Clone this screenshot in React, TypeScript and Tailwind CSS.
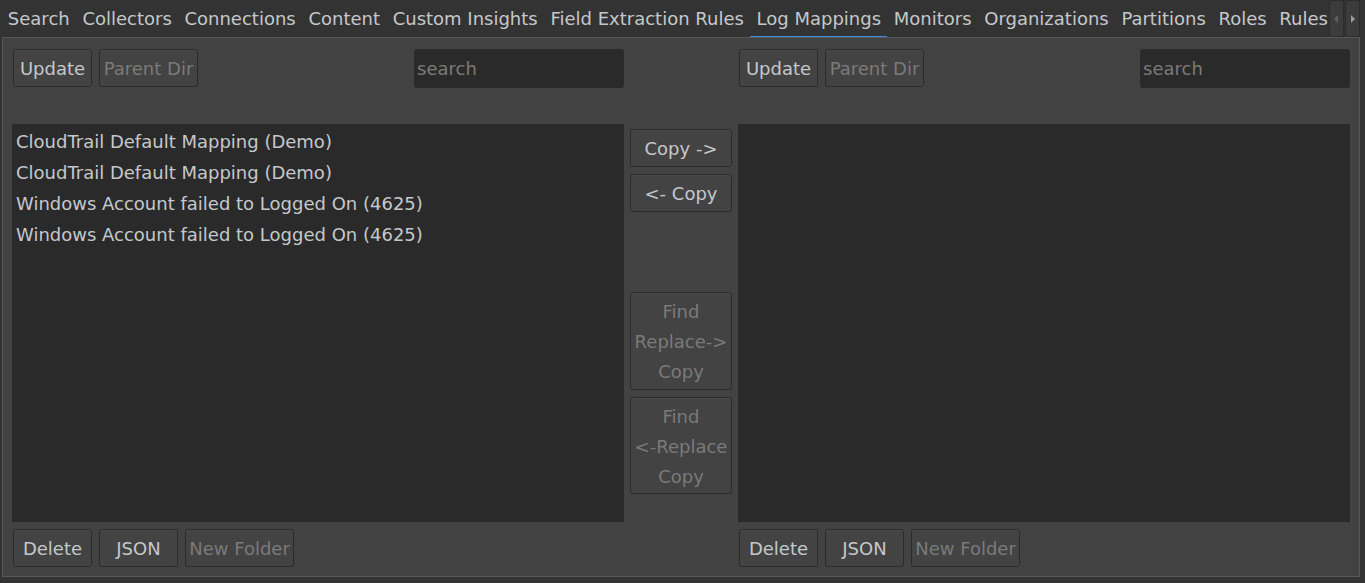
import React from "react";

const tabs = [
  "Search",
  "Collectors",
  "Connections",
  "Content",
  "Custom Insights",
  "Field Extraction Rules",
  "Log Mappings",
  "Monitors",
  "Organizations",
  "Partitions",
  "Roles",
  "Rules",
];

const items = [
  "CloudTrail Default Mapping (Demo)",
  "CloudTrail Default Mapping (Demo)",
  "Windows Account failed to Logged On (4625)",
  "Windows Account failed to Logged On (4625)",
];

function Btn({
  children,
  className = "",
  disabled = false,
}: {
  children: React.ReactNode;
  className?: string;
  disabled?: boolean;
}) {
  return (
    <button
      className={`flex items-center justify-center rounded-[3px] border border-[#2b2b2b] bg-[#434343] pt-[2px] shadow-[inset_0_1px_0_#4a4a4a] leading-[30px] ${
        disabled ? "text-[#7a7a7a]" : "text-[#c4c8cc]"
      } ${className}`}
    >
      {children}
    </button>
  );
}

function Side({ list }: { list: string[] }) {
  return (
    <div className="flex w-[612px] flex-col">
      <div className="flex h-[38px] items-center">
        <Btn className="ml-px h-[38px] w-[79px]">Update</Btn>
        <Btn disabled className="ml-[7px] h-[38px] w-[99px]">
          Parent Dir
        </Btn>
        <div className="ml-auto flex h-[39px] w-[210px] items-center rounded-[3px] bg-[#2a2a2a] pl-[3px] pt-px text-[#7a7a7a]">
          search
        </div>
      </div>
      <div className="mt-[37px] h-[398px] bg-[#2a2a2a] pt-[2px]">
        {list.map((t, i) => (
          <div key={i} className="h-[31px] pl-[4px] leading-[31px] text-[#c4c8cc]">
            {t}
          </div>
        ))}
      </div>
      <div className="mt-[7px] flex h-[38px] items-center gap-[7px] pl-px">
        <Btn className="h-[38px] w-[79px]">Delete</Btn>
        <Btn className="h-[38px] w-[79px]">JSON</Btn>
        <Btn disabled className="h-[38px] w-[109px]">
          New Folder
        </Btn>
      </div>
    </div>
  );
}

export default function App() {
  return (
    <div
      className="h-[583px] w-[1365px] overflow-hidden bg-[#333333] text-[18px]"
      style={{ fontFamily: '"DejaVu Sans", sans-serif' }}
    >
      {/* tab bar */}
      <div className="flex h-[37px]">
        <div className="flex w-[1328px] overflow-hidden pl-[1.5px]">
          {tabs.map((t) => (
            <div
              key={t}
              className="relative shrink-0 whitespace-nowrap px-[6.35px] pt-[5px] text-[#c4c8cc]"
            >
              {t}
              {t === "Log Mappings" && (
                <div className="absolute bottom-[-1px] left-0 right-0 h-[2px] bg-[#3b8bd9]" />
              )}
            </div>
          ))}
        </div>
        <div className="flex gap-[1px] pl-[1px]">
          <div className="flex h-[37px] w-[15px] items-center justify-center rounded-[3px] border border-[#2b2b2b] bg-[#3c3c3c]">
            <svg width="5" height="8" viewBox="0 0 5 8">
              <path d="M4 0 L0 4 L4 8 Z" fill="#5e5e5e" />
            </svg>
          </div>
          <div className="flex h-[37px] w-[15px] items-center justify-center rounded-[3px] border border-[#2b2b2b] bg-[#3c3c3c]">
            <svg width="5" height="8" viewBox="0 0 5 8">
              <path d="M1 0 L5 4 L1 8 Z" fill="#9a9a9a" />
            </svg>
          </div>
        </div>
      </div>

      {/* panel */}
      <div className="ml-[2px] h-[540px] w-[1358px] border border-[#585858] bg-[#424242] pl-[9px] pt-[11px]">
        <div className="flex">
          <Side list={items} />
          <div className="flex w-[114px] flex-col items-center pt-[80px]">
            <Btn className="h-[38px] w-[102px]">{"Copy ->"}</Btn>
            <Btn className="mt-[7px] h-[38px] w-[102px]">{"<- Copy"}</Btn>
            <Btn disabled className="mt-[80px] h-[98px] w-[102px] flex-col">
              <span>Find</span>
              <span>{"Replace->"}</span>
              <span>Copy</span>
            </Btn>
            <Btn disabled className="mt-[7px] h-[97px] w-[102px] flex-col">
              <span>Find</span>
              <span>{"<-Replace"}</span>
              <span>Copy</span>
            </Btn>
          </div>
          <Side list={[]} />
        </div>
      </div>
    </div>
  );
}
